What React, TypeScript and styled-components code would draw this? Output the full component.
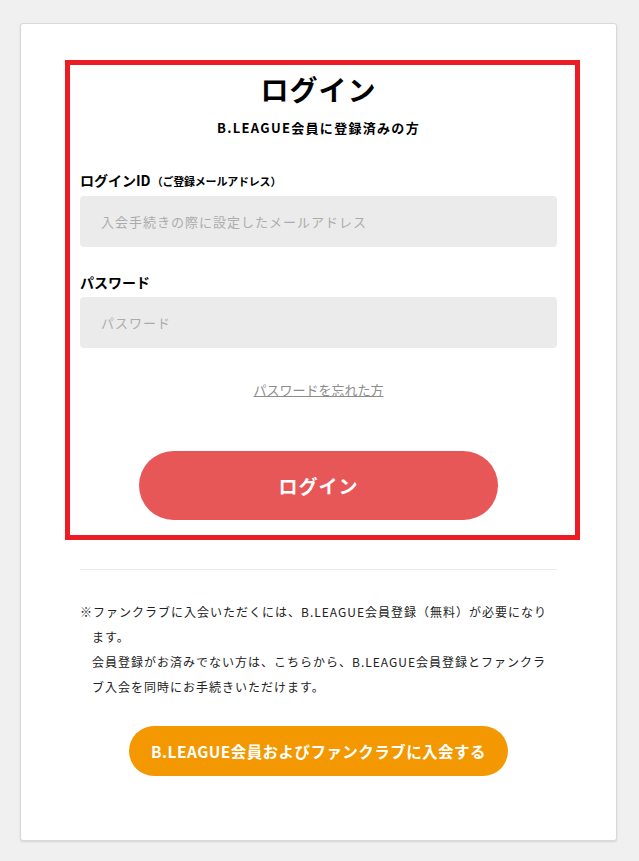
import React from 'react';
import styled, { createGlobalStyle } from 'styled-components';

const GlobalStyle = createGlobalStyle`
    html, body {
        margin: 0;
        padding: 0;
        background: #f0f0f0;
    }

    body {
        font-family: 'Noto Sans CJK JP', 'Noto Sans', sans-serif;
        color: #000;
    }

    * {
        box-sizing: border-box;
    }
`;

const Page = styled.div`
    padding: 23px 22px 20px 20px;
`;

const Card = styled.div`
    display: flex;
    flex-direction: column;
    width: 597px;
    padding: 36px 59px 64px;
    background-color: #fff;
    border: 1px solid #d9d9d9;
    border-radius: 3px;
    box-shadow: 0px 1px 2px 0px rgba(0, 0, 0, 0.12);
`;

const Highlight = styled.section`
    display: flex;
    flex-direction: column;
    margin: 0 -23px 0 -15px;
    padding: 5px 18px 15px 10px;
    border: 5px solid #ec1c24;
`;

const Title = styled.h1`
    margin: 0;
    font-size: 28px;
    line-height: 39px;
    font-weight: 700;
    letter-spacing: 1px;
    text-align: center;
`;

const Lead = styled.p`
    margin: 9px 0 0;
    font-size: 13px;
    line-height: 20px;
    font-weight: 700;
    letter-spacing: 1.3px;
    text-align: center;
`;

const Field = styled.div<{ first?: boolean }>`
    display: flex;
    flex-direction: column;
    gap: 5px;
    margin-top: ${(props) => (props.first ? '32px' : '25px')};
`;

const Label = styled.label`
    font-size: 14px;
    line-height: 20px;
    font-weight: 700;

    small {
        margin-left: 1px;
        font-size: 11px;
        font-weight: 700;
        letter-spacing: -0.2px;
    }
`;

const Input = styled.input`
    height: 51px;
    width: 100%;
    padding: 0 21px;
    border: none;
    border-radius: 4px;
    outline: none;
    background-color: #ebebeb;
    font-family: inherit;
    font-size: 13px;
    letter-spacing: 1px;
    color: #333;

    &::placeholder {
        color: #ababab;
    }
`;

const ForgotLink = styled.a`
    align-self: center;
    margin-top: 32px;
    font-size: 13px;
    line-height: 19px;
    color: #8c8c8c;
    text-decoration: underline;
    cursor: pointer;
`;

const PillButton = styled.button<{ tone: 'red' | 'orange' }>`
    align-self: center;
    display: flex;
    align-items: center;
    justify-content: center;
    border: none;
    border-radius: 999px;
    cursor: pointer;
    color: #fff;
    font-family: inherit;
    font-weight: 700;
    background-color: ${(props) => (props.tone === 'red' ? '#e75757' : '#f39800')};
`;

const LoginButton = styled(PillButton)`
    width: 359px;
    height: 69px;
    margin-top: 52px;
    font-size: 19px;
    letter-spacing: 1px;
`;

const JoinButton = styled(PillButton)`
    width: 379px;
    height: 50px;
    margin-top: 27px;
    font-size: 15.5px;
    letter-spacing: 0.45px;
`;

const Divider = styled.hr`
    margin: 29px 0 0;
    border: none;
    border-top: 1px solid #ebebeb;
`;

const Note = styled.div`
    margin-top: 29px;
    padding: 0 8px 0 12px;
    font-size: 12px;
    line-height: 25px;
    letter-spacing: 1px;
    color: #222;

    p {
        margin: 0;
    }

    p:first-child {
        text-indent: -12px;
    }
`;

export default function App(): JSX.Element {
    return (
        <>
            <GlobalStyle />
            <Page>
                <Card>
                    <Highlight>
                        <Title>ログイン</Title>
                        <Lead>B.LEAGUE会員に登録済みの方</Lead>

                        <Field first>
                            <Label htmlFor='login-id'>
                                ログインID<small>（ご登録メールアドレス）</small>
                            </Label>
                            <Input id='login-id' type='email' placeholder='入会手続きの際に設定したメールアドレス' />
                        </Field>

                        <Field>
                            <Label htmlFor='password'>パスワード</Label>
                            <Input id='password' type='password' placeholder='パスワード' />
                        </Field>

                        <ForgotLink>パスワードを忘れた方</ForgotLink>

                        <LoginButton tone='red'>ログイン</LoginButton>
                    </Highlight>

                    <Divider />

                    <Note>
                        <p>※ファンクラブに入会いただくには、B.LEAGUE会員登録（無料）が必要になります。</p>
                        <p>会員登録がお済みでない方は、こちらから、B.LEAGUE会員登録とファンクラブ入会を同時にお手続きいただけます。</p>
                    </Note>

                    <JoinButton tone='orange'>B.LEAGUE会員およびファンクラブに入会する</JoinButton>
                </Card>
            </Page>
        </>
    );
}
